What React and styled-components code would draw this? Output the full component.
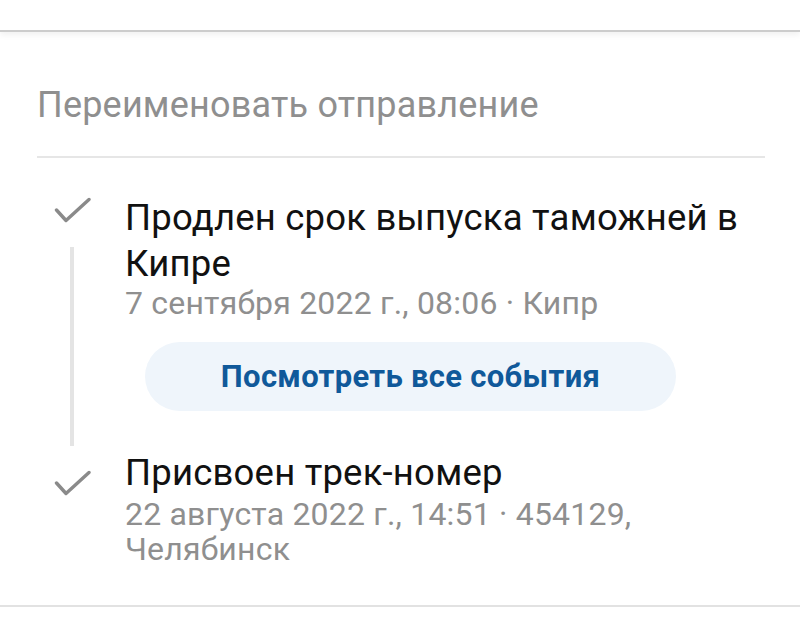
import React from 'react'
import styled, { createGlobalStyle } from 'styled-components'

const Global = createGlobalStyle`
  html, body {
    margin: 0;
    padding: 0;
    background: #ffffff;
    font-family: Roboto, 'Noto Sans', sans-serif;
  }
`

const Page = styled.div`
  width: 800px;
  height: 631px;
  overflow: hidden;
  background: #fff;
`

const TopBar = styled.div`
  height: 30px;
  border-bottom: 2px solid #cccccc;
  box-shadow: 0 3px 6px rgba(0, 0, 0, 0.06);
`

const Content = styled.div`
  padding: 0 35px 0 37px;
`

const Rename = styled.div`
  padding: 51px 0 29px;
  border-bottom: 2px solid #e6e6e6;
  font-size: 36px;
  line-height: 44px;
  color: #8f8f8f;
  letter-spacing: 0.2px;
`

const Timeline = styled.div`
  margin: 0 -35px 0 -37px;
  padding: 37px 0 38px 37px;
  border-bottom: 2px solid #e2e2e2;
`

const Event = styled.div`
  display: grid;
  grid-template-columns: 70px 1fr;
  column-gap: 18px;
  padding-bottom: ${p => (p.$last ? '0' : '39px')};
`

const Rail = styled.div`
  display: flex;
  flex-direction: column;
  align-items: center;
  padding-top: ${p => p.$top}px;
  margin-bottom: ${p => (p.$last ? '0' : '-35px')};
`

const Line = styled.div`
  width: 4px;
  flex: 1;
  margin-top: 24px;
  background: #e4e4e4;
`

const Body = styled.div`
  display: flex;
  flex-direction: column;
  align-items: flex-start;
`

const Title = styled.div`
  font-size: 36.5px;
  line-height: 46px;
  color: #111;
  letter-spacing: 0.2px;
`

const Meta = styled.div`
  font-size: 32px;
  line-height: 35px;
  color: #8f8f8f;
  letter-spacing: 0.2px;
  margin-top: ${p => p.$gap}px;
`

const MoreButton = styled.button`
  margin: 21px 0 0 20px;
  width: 531px;
  height: 69px;
  padding: 0;
  border: none;
  border-radius: 35px;
  background: #eff5fb;
  color: #10599a;
  font-family: Roboto, 'Noto Sans', sans-serif;
  font-weight: 700;
  font-size: 31px;
  letter-spacing: 0.3px;
  cursor: pointer;
`

function Check() {
  return (
    <svg width="37" height="26" viewBox="0 0 37 26">
      <path d="M2.5 13 L12 23.5 L35 2.5" fill="none" stroke="#8a8a8a" strokeWidth="3.4" strokeLinecap="round" strokeLinejoin="round" />
    </svg>
  )
}

export default function App() {
  return (
    <Page>
      <Global />
      <TopBar />
      <Content>
        <Rename>Переименовать отправление</Rename>
        <Timeline>
          <Event>
            <Rail $top={2}>
              <Check />
              <Line />
            </Rail>
            <Body>
              <Title>Продлен срок выпуска таможней в Кипре</Title>
              <Meta $gap={-1}>7 сентября 2022 г., 08:06 · Кипр</Meta>
              <MoreButton>Посмотреть все события</MoreButton>
            </Body>
          </Event>
          <Event $last>
            <Rail $top={20} $last>
              <Check />
            </Rail>
            <Body>
              <Title>Присвоен трек-номер</Title>
              <Meta $gap={1}>22 августа 2022 г., 14:51 · 454129,<br />Челябинск</Meta>
            </Body>
          </Event>
        </Timeline>
      </Content>
    </Page>
  )
}
